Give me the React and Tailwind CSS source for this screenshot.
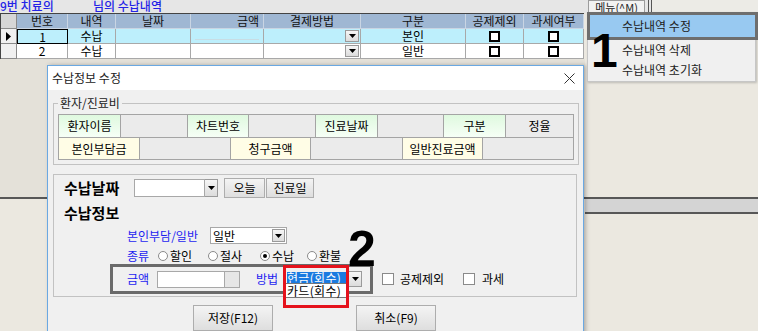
import React from "react";

function Tri({ className = "" }) {
  return (
    <svg width="7" height="4" viewBox="0 0 7 4" className={className}>
      <path d="M0 0 H7 L3.5 4 Z" fill="#000" />
    </svg>
  );
}

function DDBtn({ className = "" }) {
  return (
    <div className={"flex items-center justify-center bg-gradient-to-b from-[#f6f6f6] to-[#dcdcdc] border border-[#9a9a9a] " + className}>
      <Tri />
    </div>
  );
}

function GridCheck() {
  return <span className="block w-[11px] h-[11px] border-2 border-black bg-white" />;
}

function Radio({ checked, label, w }) {
  return (
    <div className={"flex items-center gap-[2px] " + w}>
      <span className="w-[10px] h-[10px] rounded-full border border-[#8a8a8a] bg-white flex items-center justify-center">
        {checked ? <span className="w-[4px] h-[4px] rounded-full bg-black" /> : null}
      </span>
      <span className="leading-[14px]">{label}</span>
    </div>
  );
}

function WinBtn({ children, className = "" }) {
  return (
    <div className={"flex items-center justify-center border border-[#adadad] bg-gradient-to-b from-[#f4f4f4] to-[#dedede] text-[12px] leading-[14px] " + className}>
      {children}
    </div>
  );
}

export default function App() {
  return (
    <div className="relative w-[758px] h-[331px] overflow-hidden bg-[#ebe8e0] text-[12px] text-black [font-family:'Noto_Sans_CJK_KR','Noto_Sans',sans-serif]">
      {/* top title row */}
      <div className="flex h-[13px] bg-[#e6e6e6]">
        <div className="w-[588px] flex text-[#2323e6] leading-[12px] text-[12px] font-medium">
          <span className="w-[93px]">9번 치료의</span>
          <span>님의 수납내역</span>
        </div>
        <div className="w-[57px] h-[13px] border border-[#9c9c9c] bg-[#f2f2f2] text-[11px] leading-[12px] text-center text-[#222]">메뉴(^M)</div>
        <div className="ml-[3px] w-[4px] h-[13px] border-x border-[#555]" />
        <div className="flex-1 bg-[#ecebe6]" />
      </div>

      {/* grid + right */}
      <div className="flex">
        <div className="w-[585px]">
          <div className="w-[584px] border-t border-l border-[#444] bg-white">
            {/* header */}
            <div className="flex h-[15px] text-[12px] leading-[13px] text-[#111]">
              <div className="w-[16px] bg-[#d6d6d6] border-r border-b border-[#8a8a8a]" />
              <div className="w-[51px] bg-[#9fb7d3] border-r border-b border-[#c9d5e3] text-center">번호</div>
              <div className="w-[48px] bg-[#9fb7d3] border-r border-b border-[#c9d5e3] text-center">내역</div>
              <div className="w-[75px] bg-[#9fb7d3] border-r border-b border-[#c9d5e3] text-center">날짜</div>
              <div className="w-[73px] bg-[#9fb7d3] border-r border-b border-[#c9d5e3] text-right pr-[4px]">금액</div>
              <div className="w-[97px] bg-[#9fb7d3] border-r border-b border-[#c9d5e3] text-center">결제방법</div>
              <div className="w-[105px] bg-[#9fb7d3] border-r border-b border-[#c9d5e3] text-center">구분</div>
              <div className="w-[58px] bg-[#9fb7d3] border-r border-b border-[#c9d5e3] text-center">공제제외</div>
              <div className="w-[60px] bg-[#9fb7d3] border-r border-b border-[#c9d5e3] text-center">과세여부</div>
            </div>
            {/* row 1 */}
            <div className="flex h-[15px] text-[12px] leading-[13px] bg-[#bdeffc]">
              <div className="w-[16px] bg-[#f0f0f0] border-r border-b border-[#8a8a8a] flex items-center justify-center">
                <svg width="5" height="9" viewBox="0 0 5 9"><path d="M0 0 L5 4.5 L0 9 Z" fill="#000" /></svg>
              </div>
              <div className="w-[51px] border border-black text-center">1</div>
              <div className="w-[48px] border-r border-b border-[#a8a8a8] text-center">수납</div>
              <div className="w-[75px] border-r border-b border-[#a8a8a8]" />
              <div className="w-[73px] border-r border-b border-[#a8a8a8] flex items-end px-[4px] pb-[3px]"><span className="block w-full h-px bg-[#c8dde4]" /></div>
              <div className="w-[97px] border-r border-b border-[#a8a8a8] flex items-center justify-end pr-[1px]"><DDBtn className="w-[14px] h-[12px]" /></div>
              <div className="w-[105px] border-r border-b border-[#a8a8a8] text-center">본인</div>
              <div className="w-[58px] border-r border-b border-[#a8a8a8] flex items-center justify-center"><GridCheck /></div>
              <div className="w-[60px] border-r border-b border-[#a8a8a8] flex items-center justify-center"><GridCheck /></div>
            </div>
            {/* row 2 */}
            <div className="flex h-[15px] text-[12px] leading-[13px] bg-white">
              <div className="w-[16px] bg-[#f0f0f0] border-r border-b border-[#8a8a8a]" />
              <div className="w-[51px] border-r border-b border-[#a8a8a8] text-center">2</div>
              <div className="w-[48px] border-r border-b border-[#a8a8a8] text-center">수납</div>
              <div className="w-[75px] border-r border-b border-[#a8a8a8]" />
              <div className="w-[73px] border-r border-b border-[#a8a8a8]" />
              <div className="w-[97px] border-r border-b border-[#a8a8a8] flex items-center justify-end pr-[1px]"><DDBtn className="w-[14px] h-[12px]" /></div>
              <div className="w-[105px] border-r border-b border-[#a8a8a8] text-center">일반</div>
              <div className="w-[58px] border-r border-b border-[#a8a8a8] flex items-center justify-center"><GridCheck /></div>
              <div className="w-[60px] border-r border-b border-[#a8a8a8] flex items-center justify-center"><GridCheck /></div>
            </div>
          </div>
          <div className="h-[138px] bg-[#e4e1d9]" />
        </div>
        <div className="flex-1" />
      </div>

      {/* splitter */}
      <div className="flex h-[17px]">
        <div className="w-[585px] border-t-2 border-[#575757]" />
        <div className="flex-1 border-y-2 border-[#575757] bg-[#d4d4d4]" />
      </div>

      {/* Dialog */}
      <div className="absolute left-[47px] top-[65px] w-[537px] h-[280px] border border-[#6aa8e2] bg-[#f0f0f0] shadow-[2px_0_4px_rgba(0,0,0,0.25)]">
        <div className="h-[24px] bg-white flex items-center justify-between pl-[4px] pr-[8px]">
          <span className="text-[12px] leading-[14px] text-[#222]">수납정보 수정</span>
          <svg width="11" height="11" viewBox="0 0 11 11"><path d="M0.5 0.5 L10.5 10.5 M10.5 0.5 L0.5 10.5" stroke="#333" strokeWidth="1" /></svg>
        </div>
        <div className="px-[5px] pt-[6px]">
          {/* group 1 */}
          <fieldset className="w-[524px] border border-[#c2c2c2] px-[4px] pb-[4px]">
            <legend className="px-[2px] text-[12px] leading-[14px] text-[#222]">환자/진료비</legend>
            <div className="mt-[4px] border-t border-l border-[#a4a4a4] text-[12px] text-black">
              <div className="flex h-[23px]">
                <div className="w-[62px] border-r border-b border-[#a4a4a4] bg-gradient-to-b from-[#dff9df] to-[#f6fff6] flex items-center justify-center">환자이름</div>
                <div className="w-[67px] border-r border-b border-[#a4a4a4] bg-[#ebebeb]" />
                <div className="w-[61px] border-r border-b border-[#a4a4a4] bg-gradient-to-b from-[#dff9df] to-[#f6fff6] flex items-center justify-center">차트번호</div>
                <div className="w-[67px] border-r border-b border-[#a4a4a4] bg-[#ebebeb]" />
                <div className="w-[62px] border-r border-b border-[#a4a4a4] bg-gradient-to-b from-[#dff9df] to-[#f6fff6] flex items-center justify-center">진료날짜</div>
                <div className="w-[66px] border-r border-b border-[#a4a4a4] bg-[#ebebeb]" />
                <div className="w-[62px] border-r border-b border-[#a4a4a4] bg-gradient-to-b from-[#dff9df] to-[#f6fff6] flex items-center justify-center">구분</div>
                <div className="w-[68px] border-r border-b border-[#a4a4a4] bg-[#ebebeb] flex items-center justify-center">정율</div>
              </div>
              <div className="flex h-[22px]">
                <div className="w-[81px] border-r border-b border-[#a4a4a4] bg-[#fffde6] flex items-center justify-center">본인부담금</div>
                <div className="w-[91px] border-r border-b border-[#a4a4a4] bg-[#ebebeb]" />
                <div className="w-[80px] border-r border-b border-[#a4a4a4] bg-[#fffde6] flex items-center justify-center">청구금액</div>
                <div className="w-[92px] border-r border-b border-[#a4a4a4] bg-[#ebebeb]" />
                <div className="w-[80px] border-r border-b border-[#a4a4a4] bg-[#fffde6] flex items-center justify-center">일반진료금액</div>
                <div className="w-[91px] border-r border-b border-[#a4a4a4] bg-[#ebebeb]" />
              </div>
            </div>
          </fieldset>

          {/* group 2 */}
          <div className="mt-[9px] w-[524px] h-[123px] border border-[#c2c2c2] pl-[10px] pt-[3px]">
            <div className="flex items-center h-[20px]">
              <span className="w-[70px] text-[15px] font-bold leading-[20px]">수납날짜</span>
              <div className="w-[71px] h-[18px] bg-white border border-[#a8a8a8]" />
              <DDBtn className="w-[13px] h-[18px] border-l-0" />
              <WinBtn className="ml-[6px] w-[41px] h-[20px]">오늘</WinBtn>
              <WinBtn className="ml-[1px] w-[48px] h-[20px]">진료일</WinBtn>
            </div>
            <div className="mt-[5px] h-[20px] text-[15px] font-bold leading-[20px]">수납정보</div>
            <div className="mt-[4px] ml-[63px] flex items-center h-[17px]">
              <span className="w-[83px] text-[#1d1df0] leading-[14px]">본인부담/일반</span>
              <div className="w-[77px] h-[17px] bg-white border border-[#a8a8a8] flex items-center justify-between pl-[2px]">
                <span className="leading-[14px]">일반</span>
                <DDBtn className="w-[13px] h-[13px] mr-[1px]" />
              </div>
            </div>
            <div className="mt-[5px] ml-[63px] flex items-center h-[14px]">
              <span className="w-[31px] text-[#1d1df0] leading-[14px]">종류</span>
              <Radio label="할인" w="w-[50px]" />
              <Radio label="절사" w="w-[52px]" />
              <Radio label="수납" checked w="w-[47px]" />
              <Radio label="환불" w="w-[50px]" />
            </div>
            <div className="mt-[1px] ml-[46px] flex items-center">
              <div className="w-[263px] h-[30px] border-[3px] border-[#6a6a6a] flex items-center pl-[14px]">
                <span className="w-[30px] text-[#1d1df0] leading-[14px]">금액</span>
                <div className="w-[68px] h-[17px] bg-white border border-[#a8a8a8]" />
                <div className="w-[15px] h-[17px] bg-[#e6e6e6] border border-l-0 border-[#a8a8a8]" />
                <span className="ml-[16px] w-[29px] text-[#1d1df0] leading-[14px]">방법</span>
                <div className="flex h-[17px]">
                  <div className="relative w-[63px] h-[17px] pt-[1px] pl-[2px]">
                    <span className="block w-[59px] h-[11px] bg-[#1a7ae0] text-white text-[12px] leading-[11px] tracking-[0.3px]">현금(회수)</span>
                    <div className="absolute left-0 top-[12px] w-[62px] h-[15px] bg-white border border-[#777] pl-[1px] pt-[1px] text-[12px] leading-[12px] tracking-[0.3px]">카드(회수)</div>
                    <div className="absolute left-[-2px] top-[-6px] w-[66px] h-[43px] border-[3px] border-[#e5121c]" />
                  </div>
                  <DDBtn className="w-[14px] h-[16px]" />
                </div>
              </div>
              <div className="ml-[9px] flex items-center">
                <span className="w-[12px] h-[12px] bg-white border border-[#8a8a8a]" />
                <span className="ml-[6px] w-[49px] leading-[14px]">공제제외</span>
                <span className="ml-[14px] w-[12px] h-[12px] bg-white border border-[#8a8a8a]" />
                <span className="ml-[7px] leading-[14px]">과세</span>
              </div>
            </div>
          </div>

          <div className="mt-[8px] flex">
            <WinBtn className="ml-[140px] w-[80px] h-[26px]">저장(F12)</WinBtn>
            <WinBtn className="ml-[83px] w-[80px] h-[26px]">취소(F9)</WinBtn>
          </div>
        </div>
      </div>

      {/* popup menu */}
      <div className="absolute left-[587px] top-[12px] w-[169px] h-[70px] bg-[#f0f0f0] border border-[#c6c6c6] shadow-[1px_1px_2px_rgba(0,0,0,0.2)] text-[12px] text-[#222]">
        <div className="w-[171px] h-[28px] -mt-[1px] -ml-[1px] border-[3px] border-[#6e6e6e] bg-[#98c9f1] flex items-center pl-[32px] leading-[14px]">수납내역 수정</div>
        <div className="h-[20px] flex items-center pl-[34px] leading-[14px]">수납내역 삭제</div>
        <div className="h-[20px] flex items-center pl-[34px] leading-[14px]">수납내역 초기화</div>
      </div>

      {/* annotation digits */}
      <div className="absolute left-[591px] top-[27px] text-[48px] font-bold leading-none text-black [font-family:'Liberation_Sans',sans-serif]">1</div>
      <div className="absolute left-[348px] top-[224px] text-[50px] font-bold leading-none text-black [font-family:'Liberation_Sans',sans-serif]">2</div>
    </div>
  );
}
